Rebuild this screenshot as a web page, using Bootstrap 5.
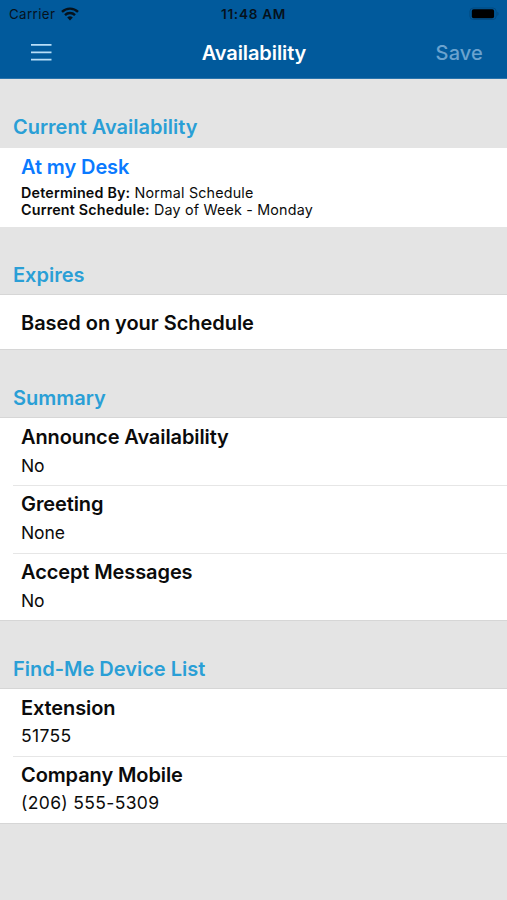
<!DOCTYPE html>
<html lang="en">
<head>
<meta charset="utf-8">
<meta name="viewport" content="width=device-width, initial-scale=1">
<title>Availability</title>
<link href="https://cdn.jsdelivr.net/npm/bootstrap@5.3.0/dist/css/bootstrap.min.css" rel="stylesheet">
<style>
body{background:#e4e4e4;font-family:Inter,"Liberation Sans",sans-serif;color:#0b0b0b;min-height:900px;overflow-x:hidden}
.top-area{background:#015a9c;height:79px;border-bottom:1px solid #2a74ac}
.status-row{height:27px;font-size:13.3px;line-height:28px;color:#06121c;display:grid;grid-template-columns:1fr auto 1fr}
.carrier{letter-spacing:.4px;margin-left:9px}
.clock{font-weight:600;font-size:13.6px;letter-spacing:.7px}
.title-row{height:51px;display:grid;grid-template-columns:1fr auto 1fr}
.title-row h1{font-size:20px;font-weight:600;line-height:52px;letter-spacing:-.1px;padding-left:1px}
.menu-btn{margin-left:31px}
.save-btn{color:#6ba3cf;font-size:20px;font-weight:500;letter-spacing:.15px;line-height:52px;margin-right:24px}
.section-title{height:67px;padding:36px 0 0 13px;font-size:20px;font-weight:600;line-height:24px;color:#2a9fd6;letter-spacing:0}
.current-title{height:69px}
.current-card{height:79px}
.rows{border-top:1px solid #d6d6d6;border-bottom:1px solid #d6d6d6}
.row-item{padding-left:21px;height:67.4px}
.row-item.single{height:54px}
.device-rows .row-item{height:67px}
.row-item+.row-item{background:linear-gradient(#e6e6e6,#e6e6e6) 13px 0/100% 1px no-repeat #fff}
.row-title{font-size:20px;font-weight:600;line-height:26px;padding-top:6px;letter-spacing:-.1px}
.single .row-title{letter-spacing:-.04px;padding-top:1px}
.row-value{font-size:17.5px;line-height:24px;padding-top:4px;letter-spacing:-.1px}
.row-value.digits{letter-spacing:.35px;padding-top:3px}
.tint{color:#0a7aff}
.details{font-size:14.3px;line-height:17px;padding-top:4px;letter-spacing:.19px}
.details b{font-weight:600}
</style>
</head>
<body>
<header class="top-area">
  <div class="status-row">
    <div class="d-flex align-items-center"><span class="carrier">Carrier</span>
      <svg class="ms-1" width="20" height="14" viewBox="-2 0 20 14" fill="none" stroke="#06121c" stroke-width="2.4"><path d="M1 4.9a11.4 11.4 0 0 1 16 0M4 8.1a7.1 7.1 0 0 1 10 0"/><path d="M9 13.4 6.2 10.5a4 4 0 0 1 5.6 0Z" fill="#06121c" stroke="none"/></svg>
    </div>
    <span class="clock">11:48 AM</span>
    <div class="d-flex align-items-center justify-content-end pe-1">
      <svg class="me-1" width="30" height="14" viewBox="0 0 30 14"><rect x=".9" y="1" width="26.3" height="11.5" rx="3.4" fill="none" stroke="#034a80"/><rect x="2.8" y="2.3" width="22.3" height="9" rx="1.8" fill="#000"/><path d="M28.3 4.7v4.2q1.3-.6 1.3-2.1t-1.3-2.1" fill="#034a80"/></svg>
    </div>
  </div>
  <div class="title-row">
    <button class="menu-btn btn p-0 border-0 text-start" aria-label="Menu"><svg class="d-block" width="21" height="18" viewBox="0 0 21 18" stroke="#b8def8" stroke-width="1.8"><path d="M0 .9h20.5M0 8.4h20.5M0 15.6h20.5"/></svg></button>
    <h1 class="text-white mb-0">Availability</h1>
    <span class="save-btn text-end">Save</span>
  </div>
</header>
<main>
  <h2 class="section-title current-title mb-0">Current Availability</h2>
  <div class="bg-white current-card">
    <div class="row-item">
      <div class="row-title tint">At my Desk</div>
      <div class="details"><div><b>Determined By:</b> Normal Schedule</div><div><b>Current Schedule:</b> Day of Week - Monday</div></div>
    </div>
  </div>
  <h2 class="section-title mb-0">Expires</h2>
  <div class="bg-white rows"><div class="row-item single d-flex align-items-center"><div class="row-title">Based on your Schedule</div></div></div>
  <h2 class="section-title mb-0">Summary</h2>
  <div class="bg-white rows">
    <div class="row-item"><div class="row-title">Announce Availability</div><div class="row-value">No</div></div>
    <div class="row-item"><div class="row-title">Greeting</div><div class="row-value">None</div></div>
    <div class="row-item"><div class="row-title">Accept Messages</div><div class="row-value">No</div></div>
  </div>
  <h2 class="section-title mb-0">Find-Me Device List</h2>
  <div class="bg-white rows device-rows">
    <div class="row-item"><div class="row-title">Extension</div><div class="row-value digits">51755</div></div>
    <div class="row-item"><div class="row-title">Company Mobile</div><div class="row-value digits">(206) 555-5309</div></div>
  </div>
</main>
<script src="https://cdn.jsdelivr.net/npm/bootstrap@5.3.0/dist/js/bootstrap.bundle.min.js"></script>
</body>
</html>
